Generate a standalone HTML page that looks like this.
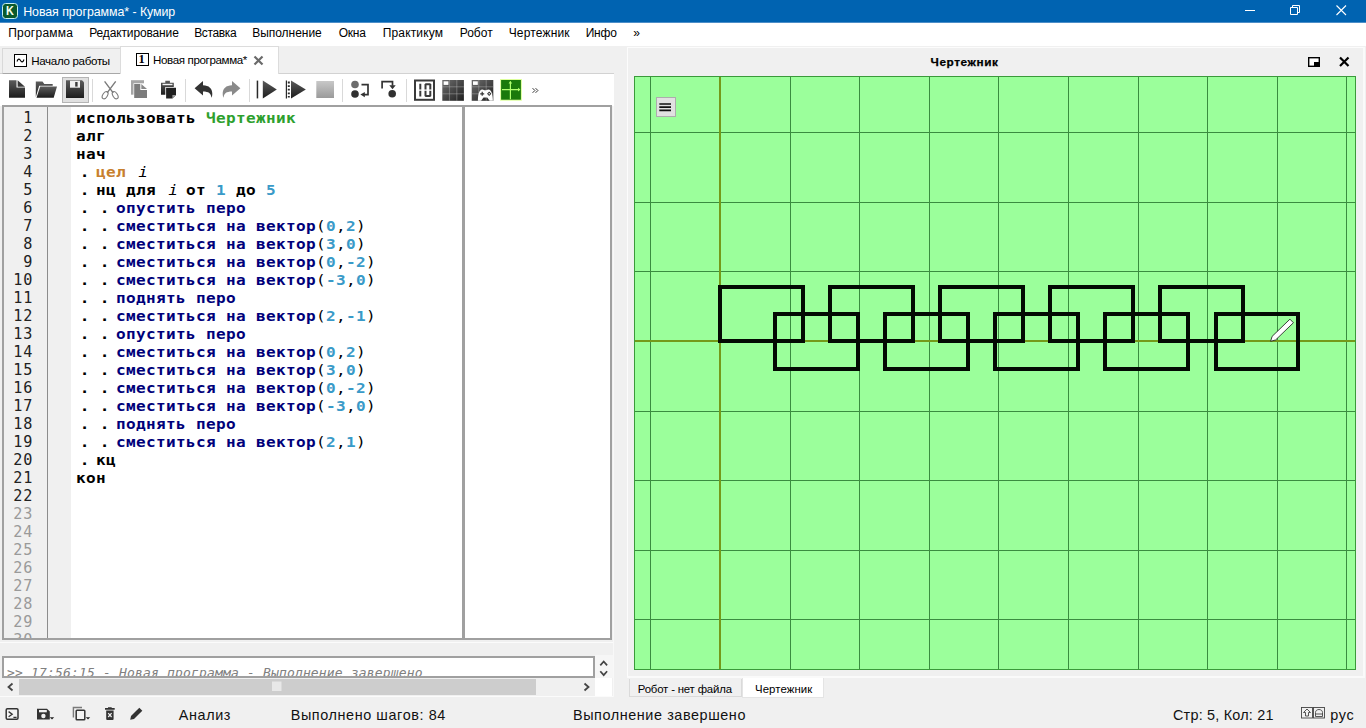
<!DOCTYPE html>
<html lang="ru">
<head>
<meta charset="utf-8">
<title>Новая программа* - Кумир</title>
<style>
*{box-sizing:border-box;margin:0;padding:0}
html,body{width:1366px;height:728px;overflow:hidden;background:#f0f0f0}
body{position:relative;font-family:"Liberation Sans","DejaVu Sans",sans-serif;font-size:12px;color:#000}
.abs{position:absolute}
svg{position:absolute;overflow:visible}
#title{left:0;top:0;width:1366px;height:23px;background:linear-gradient(#0063b1 0,#0063b1 22px,#4d8ec8 22px);color:#fff}
#title .t{position:absolute;left:23.5px;top:3.5px;font-size:12.4px;white-space:nowrap;letter-spacing:-0.12px}
#kicon{left:2px;top:3px;width:16px;height:16px;border:1px solid #c4eef0;border-radius:3.5px;background:#0a5a2c;color:#f4fff0;font-weight:bold;font-size:13.6px;line-height:14px;text-align:center}
#menu{left:0;top:23px;width:1366px;height:23px;background:#fff}
#menu span{position:absolute;top:3px;font-size:12px;white-space:nowrap;color:#000}
.tab{position:absolute;font-size:11.6px;white-space:nowrap}
.tab span{position:absolute;white-space:nowrap}
#tabline{left:0;top:73px;width:614px;height:1px;background:#d2d2d2}
#tab1{left:2px;top:48px;width:119px;height:26px;background:#f0f0f0;border:1px solid #d9d9d9;border-bottom:1px solid #a8a8a8}
#tab2{left:120px;top:46px;width:159px;height:28px;background:#fff;border:1px solid #dcdcdc;border-bottom:none}
.ticon{position:absolute;width:13px;height:13px;border:1.5px solid #000;background:#fff}
#toolbar{left:0;top:74px;width:614px;height:32px;background:#fff}
#toolbar svg{top:0;left:0}
.sep{position:absolute;top:5px;width:1px;height:23px;background:#d9d9d9}
#editor{left:2px;top:105px;width:610px;height:535px;background:#fff;border:2px solid #a0a0a0;overflow:hidden}
#gut1{left:0;top:0;width:44px;height:531px;background:#f0f0f0;border-right:1px solid #8c8c8c}
#gut2{left:44px;top:0;width:23px;height:531px;background:#f0f0f0}
#split{left:458px;top:0;width:3px;height:531px;background:#a0a0a0}
.ln{position:absolute;left:0;width:29px;text-align:right;font-family:"DejaVu Sans Mono","Liberation Mono",monospace;font-size:15.2px;letter-spacing:0.7px;line-height:18px;color:#222}
.ln.g{color:#9a9a9a}
.cl{position:absolute;left:72px;white-space:pre;font-family:"DejaVu Sans Mono","Liberation Mono",monospace;font-weight:bold;font-size:14.6px;letter-spacing:0.301px;line-height:18px;color:#000;transform:scaleX(1.1);transform-origin:0 0}
.cl b{font-weight:bold}
.cl i{font-style:normal}
.cl .c{color:#00007a}
.cl .n{color:#3a9ac8}
.cl .p{font-weight:normal;color:#000}
.cl .t{color:#c8802e}
.cl .m{color:#2ea02e}
.cl .i{font-weight:normal;font-style:italic;position:relative;left:2px}
.cl .d{position:relative;left:3.5px}
#dock{left:627px;top:47px;width:738px;height:631px;background:#f0f0f0;border:1px solid #fcfcfc;border-right:2px solid #fafafa;border-bottom:2px solid #fafafa}
#docktitle{left:0;top:0}
#canvas{left:634px;top:76px;width:722px;height:594px;background:#9bff9b;overflow:hidden;border:1px solid #3a9a3a}
#canvas svg{left:-1px;top:-1px}
#hamb{left:656px;top:97px;width:20px;height:20px;background:#e1e1e1;border:1px solid #adadad}
#btab1{left:629px;top:679px;width:113px;height:18px;background:#f0f0f0;border:1px solid #dadada;border-top:none}
#btab2{left:742px;top:678px;width:82px;height:20px;background:#fff;border:1px solid #e4e4e4;border-top:none}
#console{left:2px;top:656px;width:593px;height:22px;background:#fff;border:2px solid #a0a0a0;overflow:hidden}
#console span{position:absolute;left:3px;top:6px;white-space:pre;font-family:"DejaVu Sans Mono","Liberation Mono",monospace;font-style:italic;font-size:13px;letter-spacing:0.17px;line-height:18px;color:#808080}
#hscroll{left:2px;top:679px;width:593px;height:16px;background:#f0f0f0}
#thumb{left:19px;top:679px;width:517px;height:16px;background:#cdcdcd}
#status span{position:absolute;white-space:nowrap;font-size:15.4px;top:705.5px;color:#111}
.hl{position:absolute;height:1px;background:#fbfbfb}

</style>
</head>
<body>
<div id="title" class="abs"><div id="kicon" class="abs"><span style="display:inline-block;transform:scaleX(.8)">K</span></div><span style="position:absolute;white-space:nowrap;left:23.2px;top:4.6px;font-size:12.4px;letter-spacing:-0.062px;color:#fff;">Новая программа* - Кумир</span>
<svg width="1366" height="23" style="left:0;top:0" fill="none" stroke="#fff" stroke-width="1">
<path d="M1245 10.5h10"/>
<path d="M1290.5 7.5h7v7h-7zM1292.5 7.5v-2h7v7h-2"/>
<path d="M1336.5 5.5l9.5 9.5M1346 5.5l-9.5 9.5" stroke-width="1.1"/>
</svg>
</div>
<div id="menu" class="abs">
<span style="position:absolute;white-space:nowrap;left:8.2px;top:3px;font-size:12px;letter-spacing:0.236px;">Программа</span><span style="position:absolute;white-space:nowrap;left:89.2px;top:3px;font-size:12px;letter-spacing:-0.137px;">Редактирование</span><span style="position:absolute;white-space:nowrap;left:194.2px;top:3px;font-size:12px;letter-spacing:-0.373px;">Вставка</span><span style="position:absolute;white-space:nowrap;left:252.2px;top:3px;font-size:12px;letter-spacing:-0.034px;">Выполнение</span><span style="position:absolute;white-space:nowrap;left:338.7px;top:3px;font-size:12px;letter-spacing:-0.223px;">Окна</span><span style="position:absolute;white-space:nowrap;left:382.7px;top:3px;font-size:12px;letter-spacing:0.160px;">Практикум</span><span style="position:absolute;white-space:nowrap;left:459.7px;top:3px;font-size:12px;letter-spacing:0.013px;">Робот</span><span style="position:absolute;white-space:nowrap;left:508.7px;top:3px;font-size:12px;letter-spacing:0.156px;">Чертежник</span><span style="position:absolute;white-space:nowrap;left:585.7px;top:3px;font-size:12px;letter-spacing:-0.203px;">Инфо</span><span style="position:absolute;white-space:nowrap;left:633.2px;top:3px;font-size:12px;letter-spacing:-0.188px;">»</span>
</div>
<div id="tabline" class="abs"></div>
<div id="tab1" class="tab"><div class="ticon" style="left:11.2px;top:5px"></div><svg width="13" height="13" style="left:11.2px;top:5px" fill="none" stroke="#000" stroke-width="1.1"><path d="M3 7.5c1-3 2.5-3 3.5-1s2.5 2 3.5-1"/></svg><span style="position:absolute;white-space:nowrap;left:28.2px;top:4.5px;font-size:11.6px;letter-spacing:-0.331px;">Начало работы</span></div>
<div id="tab2" class="tab"><div class="ticon" style="left:14.5px;top:6.2px"></div><span style="left:17.5px;top:5.2px;font-family:'Liberation Serif','DejaVu Serif',serif;font-weight:bold;font-size:12.5px">1</span><span style="position:absolute;white-space:nowrap;left:32px;top:5.5px;font-size:11.6px;letter-spacing:-0.375px;">Новая программа*</span>
<svg width="12" height="12" style="left:131.6px;top:7.7px" fill="none" stroke="#6a6a6a" stroke-width="2.2"><path d="M1.5 1.5l8 8M9.5 1.5l-8 8"/></svg></div>
<div class="hl" style="left:0;top:642px;width:614px"></div>
<div class="hl" style="left:0;top:696px;width:614px"></div>
<div class="abs" style="left:595px;top:655px;width:18px;height:23px;background:#f6f6f6"></div><div class="abs" style="left:595px;top:678px;width:17px;height:18px;background:#fff"></div><div class="abs" style="left:613px;top:106px;width:1px;height:591px;background:#f8f8f8"></div><div id="console" class="abs"><span>&gt;&gt; 17:56:15 - Новая программа - Выполнение завершено</span></div>
<div id="hscroll" class="abs"></div><div id="thumb" class="abs"></div>
<svg width="614" height="60" style="left:0;top:656px" fill="none" stroke="#444" stroke-width="1.8">
<path d="M12.5 27.5l-4 3.5l4 3.5"/>
<path d="M584.5 27.5l4 3.5l-4 3.5"/>
<path d="M600.3 9.4l3.4-3.9l3.4 3.9M600.3 15.2l3.4 3.9l3.4-3.9" stroke-width="1.7"/>
<rect x="272" y="25.5" width="9.5" height="9.5" fill="#e8e8e8" stroke="none"/>
</svg>
<div id="dock" class="abs"></div>
<div id="docktitle" class="abs"><span style="position:absolute;white-space:nowrap;left:930.6px;top:54.6px;font-size:11.8px;letter-spacing:0.574px;font-weight:bold;-webkit-text-stroke:0.25px #000;">Чертежник</span></div>
<svg width="60" height="14" style="left:1304px;top:55px" fill="none" stroke="#000">
<rect x="4.7" y="2.7" width="10.6" height="8.6" stroke-width="1.4" fill="#fff"/><rect x="10" y="7" width="5.5" height="4.5" fill="#000" stroke="none"/>
<path d="M36 2.5l8.5 8.5M44.5 2.5l-8.5 8.5" stroke-width="2.2"/>
</svg>
<div id="btab1" class="tab"><span style="position:absolute;white-space:nowrap;left:7.8px;top:3.5px;font-size:11.4px;letter-spacing:-0.180px;">Робот - нет файла</span></div>
<div id="btab2" class="tab"><span style="position:absolute;white-space:nowrap;left:12px;top:4.5px;font-size:11.4px;letter-spacing:0.091px;">Чертежник</span></div>
<svg width="160" height="26" style="left:0;top:702px" viewBox="0 702 160 26">
<rect x="6.2" y="708.7" width="11.8" height="10.6" rx="1.2" fill="#f4f4f4" stroke="#333" stroke-width="1.5"/><path d="M8.6 711.6l3.6 2.6l-3.6 2.6M13.4 717.3h3.2" fill="none" stroke="#333" stroke-width="1.3"/>
<path d="M37 708.7h10l2.8 2.8v8h-12.8z" fill="#333"/><rect x="39" y="710" width="7.8" height="2.3" fill="#f0f0f0"/><circle cx="43.4" cy="716" r="2.2" fill="#f0f0f0"/><path d="M49.8 717.2h4.4l-2.2 2.2z" fill="#222"/>
<path d="M73.4 717.5v-10h8.6" fill="none" stroke="#7a7a7a" stroke-width="1.4"/><rect x="76.2" y="710.2" width="8.6" height="9.6" rx="0.8" fill="#f4f4f4" stroke="#333" stroke-width="1.5"/><path d="M85.8 717.2h4.4l-2.2 2.2z" fill="#222"/>
<path d="M105 708h9.7v1.7h-9.7zM108 707.2h3.7v1h-3.7zM106.2 710.6h7.4v8.4a1 1 0 0 1-1 1h-5.4a1 1 0 0 1-1-1z" fill="#333"/><path d="M108.2 713.2l3.4 3.8M111.6 713.2l-3.4 3.8" stroke="#f0f0f0" stroke-width="1.2"/>
<path d="M130.2 719.8l.8-3.8l8.3-8.3l3 3l-8.3 8.3z" fill="#333"/>
</svg>
<svg width="30" height="14" style="left:1300px;top:706px" viewBox="1300 706 30 14" fill="none" stroke="#444" stroke-width="0.9">
<rect x="1301.5" y="707.5" width="11" height="10.5"/><rect x="1313.5" y="707.5" width="11" height="10.5"/>
<path d="M1307 709l3.5 3.5h-2v3.5h-3v-3.5h-2zM1315.5 716.5v-4c0-4 7-4 7 0v4zM1315.5 714h7"/>
</svg>
<div id="status">
<span style="position:absolute;white-space:nowrap;left:178.7px;top:706.5px;font-size:14.4px;letter-spacing:0.634px;">Анализ</span><span style="position:absolute;white-space:nowrap;left:290.7px;top:706.5px;font-size:14.4px;letter-spacing:0.597px;">Выполнено шагов: 84</span><span style="position:absolute;white-space:nowrap;left:573px;top:706.5px;font-size:14.4px;letter-spacing:0.582px;">Выполнение завершено</span><span style="position:absolute;white-space:nowrap;left:1173px;top:706.5px;font-size:14.4px;letter-spacing:0.216px;">Стр: 5, Кол: 21</span><span style="position:absolute;white-space:nowrap;left:1330.2px;top:706.5px;font-size:14.4px;letter-spacing:0.707px;">рус</span>
</div>

<div id="toolbar" class="abs">
<svg width="614" height="32" viewBox="0 0 614 32">
<defs>
<linearGradient id="gd" x1="0" y1="0" x2="0" y2="1"><stop offset="0" stop-color="#5c5c5c"/><stop offset="1" stop-color="#1c1c1c"/></linearGradient>
<linearGradient id="gg" x1="0" y1="0" x2="0" y2="1"><stop offset="0" stop-color="#a4a4a4"/><stop offset="1" stop-color="#7a7a7a"/></linearGradient>
<linearGradient id="gs" x1="0" y1="0" x2="0" y2="1"><stop offset="0" stop-color="#c8c8c8"/><stop offset="1" stop-color="#9a9a9a"/></linearGradient>
<linearGradient id="gq" x1="0" y1="0" x2="1" y2="1"><stop offset="0" stop-color="#6e6e6e"/><stop offset="1" stop-color="#1e1e1e"/></linearGradient>
</defs>
<!-- new -->
<path d="M9 6.2h7.5v7.3h8.5v10.3h-16z" fill="url(#gd)"/><path d="M17.6 6.2l7.4 6.5h-7.4z" fill="#3a3a3a"/>
<!-- open -->
<path d="M35.8 7.6h6.7l1.8 2.4h8.4v1.7h-13.5l-3.4 11.3z" fill="url(#gd)"/><path d="M40.2 12.6h16.8l-3.3 11.1h-17.2z" fill="url(#gd)"/>
<!-- save -->
<rect x="62.5" y="3.5" width="26" height="25" fill="#e0e0e0" stroke="#b4b4b4"/>
<path d="M66 6.2h16l2 2v15.7h-18z" fill="url(#gd)"/><rect x="70" y="6.7" width="10" height="7" fill="#f0f0f0"/><rect x="75.2" y="8" width="2.4" height="4.6" fill="#3a3a3a"/>
<!-- scissors -->
<g fill="none" stroke="#7a7a7a" stroke-width="1.1"><path d="M104.6 7.4l8.6 11.4M115.7 7.4l-8.6 11.4" stroke-width="1.4"/><ellipse cx="105.1" cy="21.2" rx="2.3" ry="4" transform="rotate(32 105.1 21.2)"/><ellipse cx="115.2" cy="21.2" rx="2.3" ry="4" transform="rotate(-32 115.2 21.2)"/></g>
<!-- copy -->
<path d="M131 6.2h13v14.5h-13z" fill="#a6a6a6"/><path d="M133.5 9.3h14v15h-14z" fill="#fff"/><path d="M134.2 10h6.1v6h6.7v7.9h-12.8z" fill="#7c7c7c"/><path d="M141.3 10l5.7 5h-5.7z" fill="#888"/>
<!-- paste -->
<path d="M161 8.8h4.3v-2.1h4.6v2.1h3.9v11.9h-12.8z" fill="url(#gd)"/><rect x="162.5" y="9.8" width="10" height="1.4" fill="#f4f4f4"/><path d="M165.3 13h11.4v12h-11.4z" fill="#fff"/><path d="M166.1 13.8h9.9v7.2l-3.6 3.6h-6.3z" fill="#202020"/><path d="M172.4 21h3.6l-3.6 3.6z" fill="#9a9a9a"/>
<!-- undo -->
<path d="M194.6 14.2l8.4-7.2v4.3c6 0 9.3 3.5 9.3 8.5c0 1.8-.4 3.2-1 4c0-4.2-2.6-6.2-8.3-6.2v4z" fill="#333"/>
<!-- redo -->
<path d="M240.4 14.2l-8.4-7.2v4.3c-6 0-9.3 3.5-9.3 8.5c0 1.8.4 3.2 1 4c0-4.2 2.6-6.2 8.3-6.2v4z" fill="#8a8a8a"/>
<!-- run -->
<rect x="256.7" y="6.6" width="1.5" height="17.8" fill="#2a2a2a"/><path d="M262.8 6.6l14 8.9l-14 8.9z" fill="url(#gd)"/>
<!-- step run -->
<path d="M285.8 6.6h1.2v17.8h-1.2z" fill="#2a2a2a"/><path d="M288.8 7.6v16" stroke="#2a2a2a" stroke-width="2" stroke-dasharray="1.8 1.8"/><path d="M291 6.6l14.8 8.9l-14.8 8.9z" fill="url(#gd)"/>
<!-- stop -->
<rect x="316.3" y="7" width="17.7" height="17" fill="url(#gs)"/>
<!-- step in -->
<circle cx="355" cy="10.5" r="3.8" fill="#6c6c6c"/><circle cx="355" cy="20" r="3.8" fill="#303030"/>
<path d="M361.5 10.7h6.5v9.9h-4.5" fill="none" stroke="#333" stroke-width="1.7"/><path d="M360.4 20.6l4.4-2.7v5.4z" fill="#333"/>
<!-- step over -->
<path d="M382.1 14.4v-6.7h10.4v4" fill="none" stroke="#333" stroke-width="1.7"/><path d="M389.3 11.2h6.4l-3.2 4z" fill="#333"/><circle cx="392.2" cy="19.7" r="3.8" fill="#303030"/>
<!-- 10 -->
<rect x="415" y="6.5" width="19" height="19.3" fill="#fff" stroke="#3a3a3a" stroke-width="2"/>
<path d="M420.3 9.7v5.8M420.3 16.7v5.8M425.5 10v5.5M425.5 16.7v5.5M430.3 10v5.5M430.3 16.7v5.5M425.2 10.3h5.4M425.2 21.9h5.4" stroke="#3a3a3a" stroke-width="2" fill="none"/>
<!-- grid -->
<rect x="442.3" y="6" width="21.6" height="20.8" fill="url(#gq)"/><path d="M449.4 6v20.8M456.8 6v20.8M442.3 12.8h21.6M442.3 19.8h21.6" stroke="#bbb" stroke-width="0.8" fill="none" opacity=".55"/><rect x="443.6" y="7.3" width="4.8" height="3.6" fill="#fff"/>
<!-- pult -->
<rect x="471.7" y="6" width="21.6" height="20.8" fill="url(#gq)"/><path d="M478.8 6v20.8M486.2 6v20.8M471.7 12.8h21.6M471.7 19.8h21.6" stroke="#bbb" stroke-width="0.8" fill="none" opacity=".55"/><rect x="473" y="7.3" width="4.8" height="3.6" fill="#fff"/>
<path d="M477.9 26.8c0-6 1.2-11.4 4.4-11.4c1.4 0 1.8.8 3 .8s1.7-.8 3.1-.8c3.2 0 4.5 5.4 4.5 11.4h-3.3l-2.4-3.2h-3.7l-2.4 3.2z" fill="#fff"/><path d="M480.2 19.8h4M482.2 17.8v4" stroke="#333" stroke-width="1.2"/><path d="M489.2 17.6l2.2 2.2l-2.2 2.2l-2.2-2.2z" fill="#333"/><circle cx="489.2" cy="19.8" r="0.7" fill="#fff"/>
<!-- draftsman -->
<rect x="500.1" y="5" width="21.8" height="21.7" fill="#dcff9a"/><rect x="501.1" y="6" width="19.8" height="19.7" fill="#1a7a0c"/>
<path d="M510.4 7.6v17.7M502 15.6h17.6" stroke="#b0ff70" stroke-width="1.2" fill="none"/><path d="M508.6 9.4l1.8-2.4l1.8 2.4zM518 13.8l2.4 1.8l-2.4 1.8z" fill="#b0ff70"/>
<!-- chevron -->
<path d="M532.6 14.2l2.3 2.3l-2.3 2.3M535.6 14.2l2.3 2.3l-2.3 2.3" fill="none" stroke="#333" stroke-width="1"/>
</svg>
<div class="sep" style="left:92px"></div><div class="sep" style="left:185px"></div><div class="sep" style="left:249px"></div><div class="sep" style="left:342px"></div><div class="sep" style="left:406px"></div>

</div>
<div id="editor" class="abs">
<div id="gut1" class="abs"></div><div id="gut2" class="abs"></div><div id="split" class="abs"></div>
<div class="ln" style="top:2px">1</div>
<div class="ln" style="top:20px">2</div>
<div class="ln" style="top:38px">3</div>
<div class="ln" style="top:56px">4</div>
<div class="ln" style="top:74px">5</div>
<div class="ln" style="top:92px">6</div>
<div class="ln" style="top:110px">7</div>
<div class="ln" style="top:128px">8</div>
<div class="ln" style="top:146px">9</div>
<div class="ln" style="top:164px">10</div>
<div class="ln" style="top:182px">11</div>
<div class="ln" style="top:200px">12</div>
<div class="ln" style="top:218px">13</div>
<div class="ln" style="top:236px">14</div>
<div class="ln" style="top:254px">15</div>
<div class="ln" style="top:272px">16</div>
<div class="ln" style="top:290px">17</div>
<div class="ln" style="top:308px">18</div>
<div class="ln" style="top:326px">19</div>
<div class="ln" style="top:344px">20</div>
<div class="ln" style="top:362px">21</div>
<div class="ln" style="top:380px">22</div>
<div class="ln g" style="top:398px">23</div>
<div class="ln g" style="top:416px">24</div>
<div class="ln g" style="top:434px">25</div>
<div class="ln g" style="top:452px">26</div>
<div class="ln g" style="top:470px">27</div>
<div class="ln g" style="top:488px">28</div>
<div class="ln g" style="top:506px">29</div>
<div class="ln g" style="top:524px">30</div>
<div class="cl" style="top:2px">использовать <b class="m">Чертежник</b></div>
<div class="cl" style="top:20px">алг</div>
<div class="cl" style="top:38px">нач</div>
<div class="cl" style="top:56px"><i class="d">.</i> <b class="t">цел</b> <i class="i">i</i></div>
<div class="cl" style="top:74px"><i class="d">.</i> нц для <i class="i">i</i> от <b class="n">1</b> до <b class="n">5</b></div>
<div class="cl" style="top:92px"><i class="d">.</i> <i class="d">.</i> <b class="c">опустить перо</b></div>
<div class="cl" style="top:110px"><i class="d">.</i> <i class="d">.</i> <b class="c">сместиться на вектор</b><i class="p">(</i><b class="n">0</b><i class="p">,</i><b class="n">2</b><i class="p">)</i></div>
<div class="cl" style="top:128px"><i class="d">.</i> <i class="d">.</i> <b class="c">сместиться на вектор</b><i class="p">(</i><b class="n">3</b><i class="p">,</i><b class="n">0</b><i class="p">)</i></div>
<div class="cl" style="top:146px"><i class="d">.</i> <i class="d">.</i> <b class="c">сместиться на вектор</b><i class="p">(</i><b class="n">0</b><i class="p">,</i><b class="n">-2</b><i class="p">)</i></div>
<div class="cl" style="top:164px"><i class="d">.</i> <i class="d">.</i> <b class="c">сместиться на вектор</b><i class="p">(</i><b class="n">-3</b><i class="p">,</i><b class="n">0</b><i class="p">)</i></div>
<div class="cl" style="top:182px"><i class="d">.</i> <i class="d">.</i> <b class="c">поднять перо</b></div>
<div class="cl" style="top:200px"><i class="d">.</i> <i class="d">.</i> <b class="c">сместиться на вектор</b><i class="p">(</i><b class="n">2</b><i class="p">,</i><b class="n">-1</b><i class="p">)</i></div>
<div class="cl" style="top:218px"><i class="d">.</i> <i class="d">.</i> <b class="c">опустить перо</b></div>
<div class="cl" style="top:236px"><i class="d">.</i> <i class="d">.</i> <b class="c">сместиться на вектор</b><i class="p">(</i><b class="n">0</b><i class="p">,</i><b class="n">2</b><i class="p">)</i></div>
<div class="cl" style="top:254px"><i class="d">.</i> <i class="d">.</i> <b class="c">сместиться на вектор</b><i class="p">(</i><b class="n">3</b><i class="p">,</i><b class="n">0</b><i class="p">)</i></div>
<div class="cl" style="top:272px"><i class="d">.</i> <i class="d">.</i> <b class="c">сместиться на вектор</b><i class="p">(</i><b class="n">0</b><i class="p">,</i><b class="n">-2</b><i class="p">)</i></div>
<div class="cl" style="top:290px"><i class="d">.</i> <i class="d">.</i> <b class="c">сместиться на вектор</b><i class="p">(</i><b class="n">-3</b><i class="p">,</i><b class="n">0</b><i class="p">)</i></div>
<div class="cl" style="top:308px"><i class="d">.</i> <i class="d">.</i> <b class="c">поднять перо</b></div>
<div class="cl" style="top:326px"><i class="d">.</i> <i class="d">.</i> <b class="c">сместиться на вектор</b><i class="p">(</i><b class="n">2</b><i class="p">,</i><b class="n">1</b><i class="p">)</i></div>
<div class="cl" style="top:344px"><i class="d">.</i> кц</div>
<div class="cl" style="top:362px">кон</div>
</div>
<div id="canvas" class="abs"><svg width="722" height="594" viewBox="634 76 722 594" shape-rendering="auto">
<path d="M650.5 76v594M790.5 76v594M859.5 76v594M929.5 76v594M998.5 76v594M1068.5 76v594M1138.5 76v594M1207.5 76v594M1277.5 76v594M1346.5 76v594M634 132.5h722M634 202.5h722M634 271.5h722M634 411.5h722M634 480.5h722M634 550.5h722M634 619.5h722" stroke="#3a8c40" stroke-width="1" fill="none"/>
<path d="M720 76v594M634 341h722" stroke="#749a1a" stroke-width="2" fill="none"/>
<path d="M720 341H803V287H720zM775 369H858V314H775zM830 341H913V287H830zM885 369H968V314H885zM940 341H1023V287H940zM995 369H1078V314H995zM1050 341H1133V287H1050zM1105 369H1188V314H1105zM1160 341H1243V287H1160zM1216 369H1298V314H1216z" stroke="#040a04" stroke-width="4" fill="none" stroke-linejoin="miter" shape-rendering="crispEdges"/>
<g transform="translate(1270.6 341.3) rotate(-44)"><path d="M0 0l4.5-2.5h24.8v5h-24.8z" fill="#fff" stroke="#222" stroke-width="0.8"/></g>
</svg></div>
<div id="hamb" class="abs"></div><svg width="20" height="20" style="left:656px;top:97px" stroke="#111" stroke-width="1.7" fill="none"><path d="M3.3 7h11.7M3.3 10.200h11.7M3.3 13.400h11.7"/></svg>

</body>
</html>
